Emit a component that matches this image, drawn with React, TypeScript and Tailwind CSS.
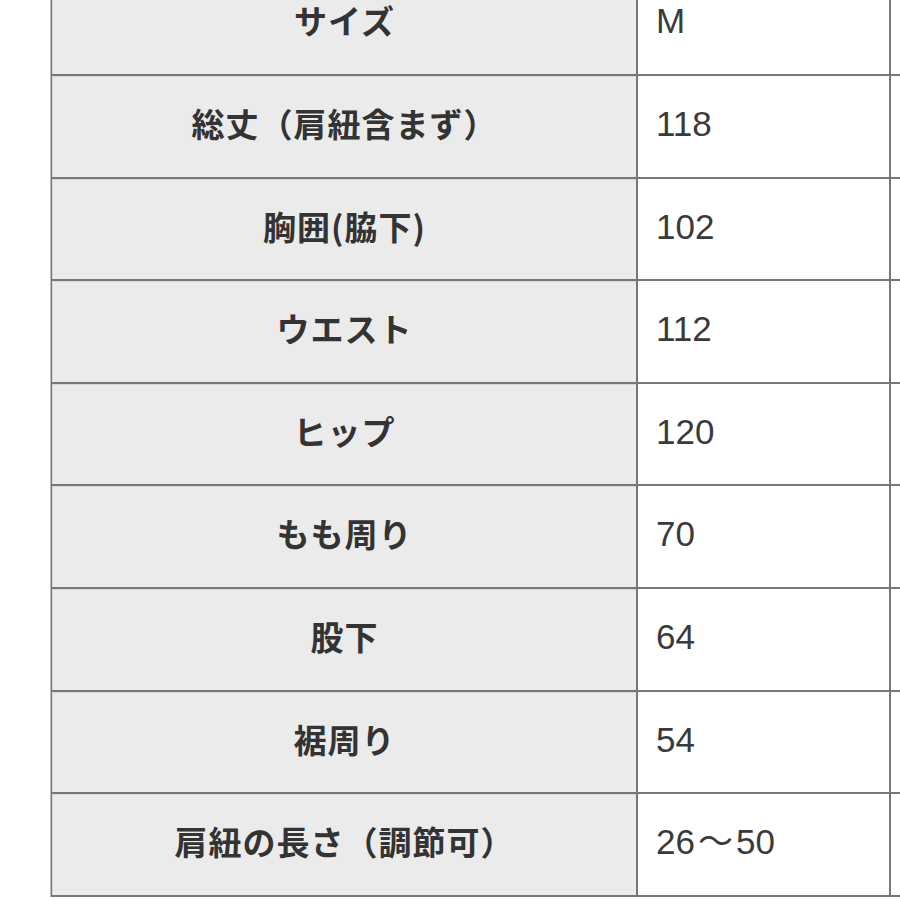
import React from "react";

const rows: [string, string][] = [
  ["サイズ", "M"],
  ["総丈（肩紐含まず）", "118"],
  ["胸囲(脇下)", "102"],
  ["ウエスト", "112"],
  ["ヒップ", "120"],
  ["もも周り", "70"],
  ["股下", "64"],
  ["裾周り", "54"],
  ["肩紐の長さ（調節可）", "26〜50"],
];

const Value = ({ text }: { text: string }) => {
  const parts = text.split("〜");
  if (parts.length < 2) return <>{text}</>;
  return (
    <>
      {parts[0]}
      <span className="mx-[3px]">〜</span>
      {parts[1]}
    </>
  );
};

const App = () => (
  <div className="w-[900px] h-[900px] overflow-hidden bg-white pl-[50px]">
    <div className="mt-[-28.6px] w-[900px] grid grid-cols-[584px_251px_60px] gap-[2px] p-[2px] bg-[#777] shadow-[inset_1px_1px_0_#bdbdbd]">
      {rows.map(([label, value]) => (
        <React.Fragment key={label}>
          <div className="h-[100.6px] bg-[#ebebeb] border-t border-l border-[#d8d8d8] flex items-center justify-center pb-[6px]">
            <span className="text-[33px] font-bold text-[#333] tracking-[1px] [font-family:'Noto_Sans_CJK_JP','Noto_Sans_CJK_SC',sans-serif]">
              {label}
            </span>
          </div>
          <div className="h-[100.6px] bg-white flex items-center pl-[18px] pb-[4px]">
            <span className="text-[35px] text-[#3a3a3a] [font-family:'Liberation_Sans','Noto_Sans_CJK_JP',sans-serif]">
              <Value text={value} />
            </span>
          </div>
          <div className="h-[100.6px] bg-white" />
        </React.Fragment>
      ))}
    </div>
  </div>
);

export default App;
